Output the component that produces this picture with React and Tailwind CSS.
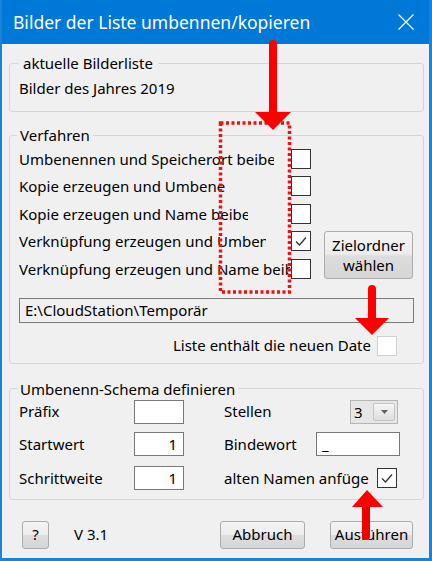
import React from "react";

const btn =
  "rounded-[3px] border border-[#acacac] bg-[linear-gradient(#f4f4f4_0%,#ececec_48%,#dddddd_52%,#d6d6d6_100%)] text-black";

function Box({ checked, light }) {
  return (
    <div
      className={
        "flex h-[20px] w-[20px] shrink-0 items-center justify-center bg-white border " +
        (light ? "border-[#d0d0d0]" : "border-[#333333]")
      }
    >
      {checked && (
        <svg width="14" height="14" viewBox="0 0 14 14">
          <polyline points="2,7.5 5.5,11 12,3.5" fill="none" stroke="#333" strokeWidth="1.3" />
        </svg>
      )}
    </div>
  );
}

function Field({ children, className }) {
  return (
    <div className={"h-[24px] border border-[#7a7a7a] bg-white leading-[22px] " + className}>{children}</div>
  );
}

// labels are cut off in the original dialog, each at its own width
const verfahren = [
  ["Umbenennen und Speicherort beibehalten", "w-[255px]", false],
  ["Kopie erzeugen und Umbenennen", "w-[206px]", false],
  ["Kopie erzeugen und Name beibehalten", "w-[229px]", false],
  ["Verknüpfung erzeugen und Umbenennen", "w-[247px]", true],
  ["Verknüpfung erzeugen und Name beibehalten", "w-[271px]", false],
];

export default function App() {
  return (
    <div className="relative h-[561px] w-[432px] overflow-hidden border-l-2 border-r-[3px] border-b-[3px] border-[#1883d7] bg-[#f0f0f0] font-['Noto_Sans',sans-serif] text-[15px] text-black">
      {/* title bar */}
      <div className="flex h-[44px] items-center justify-between bg-[#0078d7] pl-[11px] pr-[15px] text-[17.5px] text-white">
        <span>Bilder der Liste umbennen/kopieren</span>
        <svg width="16" height="16" viewBox="0 0 16 16">
          <path d="M0.5 0.5 L15.5 15.5 M15.5 0.5 L0.5 15.5" stroke="#fff" strokeWidth="1.2" />
        </svg>
      </div>

      <div className="ml-[7px] mr-[5px]">
        {/* aktuelle Bilderliste */}
        <fieldset className="mt-[9px] rounded-[3px] border border-[#d5d5d5]">
          <legend className="ml-[8px] px-[5px] leading-[20px]">aktuelle Bilderliste</legend>
          <div className="pb-[13px] pl-[9px] pt-[5px] leading-[20px]">Bilder des Jahres 2019</div>
        </fieldset>

        {/* Verfahren */}
        <fieldset className="mt-[13px] rounded-[3px] border border-[#d5d5d5]">
          <legend className="ml-[7px] px-[3px] leading-[20px]">Verfahren</legend>
          <div className="pb-[7px] pl-[9px] pr-[9px]">
            <div className="flex">
              <div className="flex flex-col">
                {verfahren.map(([t, w, c]) => (
                  <div key={t} className="flex h-[27.5px] items-center">
                    <div className="w-[272px]">
                      <div className={w + " overflow-hidden whitespace-nowrap"}>{t}</div>
                    </div>
                    <Box checked={c} />
                  </div>
                ))}
              </div>
              <button
                className={btn + " mb-[3.5px] ml-[13px] h-[48px] w-[89px] self-end leading-[20px]"}
              >
                Zielordner
                <br />
                wählen
              </button>
            </div>
            <div className="mt-[15.5px] h-[25px] border border-[#7a7a7a] bg-[#f0f0f0] pl-[5px] leading-[23px]">
              E:\CloudStation\Temporär
            </div>
            <div className="mr-[17px] mt-[12.5px] flex h-[20px] items-center justify-end gap-[6px]">
              <span>Liste enthält die neuen Date</span>
              <Box light />
            </div>
          </div>
        </fieldset>

        {/* Umbenenn-Schema */}
        <fieldset className="mt-[15px] rounded-[3px] border border-[#d5d5d5]">
          <legend className="ml-[7px] px-[3px] leading-[20px]">Umbenenn-Schema definieren</legend>
          <div className="pb-[8.5px] pl-[9px] pr-[23px]">
            <div className="mt-[1px] flex h-[24px] items-center">
              <span className="w-[115px]">Präfix</span>
              <Field className="w-[50px]" />
              <span className="ml-[40px] flex-1">Stellen</span>
              <div className="mr-[2px] flex h-[24px] w-[48px] items-center border border-[#b5b5b5] bg-[#e6e6e6] pl-[3px] pr-[2px]">
                <span className="flex-1 leading-[22px]">3</span>
                <div className="flex h-[18px] w-[22px] items-center justify-center rounded-[2px] border border-[#c4c4c4] bg-[linear-gradient(#f6f6f6,#dedede)]">
                  <svg width="7" height="4" viewBox="0 0 7 4">
                    <path d="M0 0 H7 L3.5 4 Z" fill="#606060" />
                  </svg>
                </div>
              </div>
            </div>
            <div className="mt-[8.5px] flex h-[24px] items-center">
              <span className="w-[115px]">Startwert</span>
              <Field className="w-[50px] pr-[6px] text-right">1</Field>
              <span className="ml-[40px] flex-1">Bindewort</span>
              <Field className="w-[84px] pl-[5px]">_</Field>
            </div>
            <div className="mt-[10px] flex h-[24px] items-center">
              <span className="w-[115px]">Schrittweite</span>
              <Field className="w-[50px] pr-[6px] text-right">1</Field>
              <span className="ml-[40px] flex-1">alten Namen anfüge</span>
              <div className="mr-[3px]">
                <Box checked />
              </div>
            </div>
          </div>
        </fieldset>

        {/* bottom buttons */}
        <div className="mt-[21px] flex h-[28px] items-center">
          <button className={btn + " ml-[13px] h-[28px] w-[27px]"}>?</button>
          <span className="ml-[25px]">V 3.1</span>
          <button className={btn + " ml-auto h-[28px] w-[85px]"}>Abbruch</button>
          <button className={btn + " ml-[25px] mr-[11px] h-[28px] w-[83px]"}>Ausführen</button>
        </div>
      </div>

      {/* red annotation overlay */}
      <svg className="pointer-events-none absolute left-[-2px] top-0" width="432" height="561" viewBox="0 0 432 561">
        <rect x="220.5" y="123" width="69" height="169" fill="none" stroke="#ee1111" strokeWidth="3.5" strokeDasharray="3 2.5" />
        <line x1="273" y1="44" x2="273" y2="114" stroke="#ff0000" strokeWidth="8" strokeLinecap="round" />
        <polygon points="255,112 291,112 273,130" fill="#ff0000" />
        <line x1="372" y1="289" x2="372" y2="320" stroke="#ff0000" strokeWidth="8" strokeLinecap="round" />
        <polygon points="355,318 389,318 372,335" fill="#ff0000" />
        <line x1="366" y1="505" x2="366" y2="536" stroke="#ee0000" strokeWidth="8" strokeLinecap="round" />
        <polygon points="352,507 383,507 367,490" fill="#ff0000" />
      </svg>
    </div>
  );
}
